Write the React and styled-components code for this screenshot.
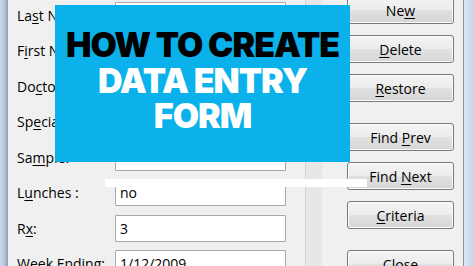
import React from 'react';
import styled, { createGlobalStyle } from 'styled-components';

const GlobalStyle = createGlobalStyle`
  html, body {
    margin: 0;
    padding: 0;
    width: 474px;
    height: 266px;
    overflow: hidden;
    background: #f0f0f0;
  }
  body {
    font-family: "Open Sans", "Liberation Sans", sans-serif;
  }
`;

const Window = styled.div`
  position: relative;
  display: flex;
  width: 474px;
  height: 266px;
  overflow: hidden;
  background: #f0f0f0;
`;

const LeftFrame = styled.div`
  flex: none;
  width: 7px;
  background: linear-gradient(90deg, #cbd8e7, #b6c7dc 60%, #98abc2);
  border-right: 1px solid #95a1b0;
`;

const RightFrame = styled.div`
  flex: none;
  width: 10px;
  margin-left: 9px;
  border-left: 1px solid #8a96a4;
  background: linear-gradient(90deg, #dbe7f5, #c2d5ec);
`;

const Fields = styled.div`
  flex: none;
  display: flex;
  flex-direction: column;
  gap: 8.5px;
  width: 269px;
  margin-left: 9px;
  padding-top: 1.5px;
`;

const Row = styled.div`
  display: flex;
  align-items: center;
  height: 27px;
`;

const Label = styled.label`
  width: 98px;
  flex: none;
  font-size: 14px;
  color: #000;
  white-space: nowrap;
  u {
    text-decoration-thickness: 1px;
    text-underline-offset: 2px;
  }
`;

const TextBox = styled.input`
  box-sizing: border-box;
  width: 171px;
  height: 27px;
  margin: 0;
  padding: 0 4px;
  border: 1px solid #a8a8a8;
  border-radius: 1px;
  background: #fff;
  font-family: "Open Sans", "Liberation Sans", sans-serif;
  font-size: 14px;
  color: #000;
  outline: none;
`;

const ScrollTrack = styled.div`
  flex: none;
  width: 16px;
  margin-left: 19px;
  background: #e7e7e7;
  border-left: 1px solid #d2d2d2;
`;

const Buttons = styled.div`
  flex: none;
  display: flex;
  flex-direction: column;
  width: 107px;
  margin-left: 25px;
  margin-top: -4px;
`;

const Button = styled.button`
  box-sizing: border-box;
  flex: none;
  height: 28px;
  margin: 0;
  margin-top: ${p => (p.$first ? 0 : p.$group ? 21 : 11)}px;
  padding: 0;
  border: 1px solid #7a7a7a;
  border-radius: 3px;
  background: linear-gradient(#f4f4f4 0%, #ececec 48%, #e0e0e0 52%, #d6d6d6 100%);
  box-shadow: inset 0 0 0 1px #fbfbfb;
  font-family: "Open Sans", "Liberation Sans", sans-serif;
  font-size: 14px;
  color: #000;
  u {
    text-decoration-thickness: 1px;
    text-underline-offset: 2px;
  }
`;

const TitleCard = styled.div`
  position: absolute;
  left: 55px;
  top: 5px;
  width: 295px;
  height: 157px;
  box-sizing: border-box;
  padding-top: 22px;
  background: #0ab1ea;
  text-align: center;
  font-family: Inter, "Liberation Sans", sans-serif;
  font-weight: 900;
  font-size: 34px;
  line-height: 35.5px;
  letter-spacing: -1px;
`;

const TitleLine = styled.div`
  color: ${p => p.$color};
  white-space: nowrap;
`;

const WhiteStrip = styled.div`
  position: absolute;
  left: 105px;
  top: 179px;
  width: 262px;
  height: 8px;
  background: #fff;
`;

const fields = [
  { label: ['La', 's', 't Name:'] },
  { label: ['F', 'i', 'rst Name:'] },
  { label: ['Do', 'c', 'tor:'] },
  { label: ['Sp', 'e', 'cialty:'] },
  { label: ['Sa', 'm', 'ple:'] },
  { label: ['L', 'u', 'nches :'], value: 'no' },
  { label: ['R', 'x', ':'], value: '3' },
  { label: ['Week Ending:', '', ''], value: '1/12/2009' },
];

const buttons = [
  { parts: ['Ne', 'w', ''] },
  { parts: ['', 'D', 'elete'] },
  { parts: ['', 'R', 'estore'] },
  { parts: ['Find ', 'P', 'rev'], group: true },
  { parts: ['Find ', 'N', 'ext'] },
  { parts: ['', 'C', 'riteria'] },
  { parts: ['C', 'l', 'ose'], group: true },
];

const Accel = ({ parts }) => (
  <>
    {parts[0]}
    {parts[1] && <u>{parts[1]}</u>}
    {parts[2]}
  </>
);

export default function App() {
  return (
    <Window>
      <GlobalStyle />
      <LeftFrame />
      <Fields>
        {fields.map((f, i) => (
          <Row key={i}>
            <Label>
              <Accel parts={f.label} />
            </Label>
            <TextBox readOnly defaultValue={f.value || ''} />
          </Row>
        ))}
      </Fields>
      <ScrollTrack />
      <Buttons>
        {buttons.map((b, i) => (
          <Button key={i} $first={i === 0} $group={b.group}>
            <Accel parts={b.parts} />
          </Button>
        ))}
      </Buttons>
      <RightFrame />
      <WhiteStrip />
      <TitleCard>
        <TitleLine $color="#000">HOW TO CREATE</TitleLine>
        <TitleLine $color="#fff">DATA ENTRY</TitleLine>
        <TitleLine $color="#fff">FORM</TitleLine>
      </TitleCard>
    </Window>
  );
}
